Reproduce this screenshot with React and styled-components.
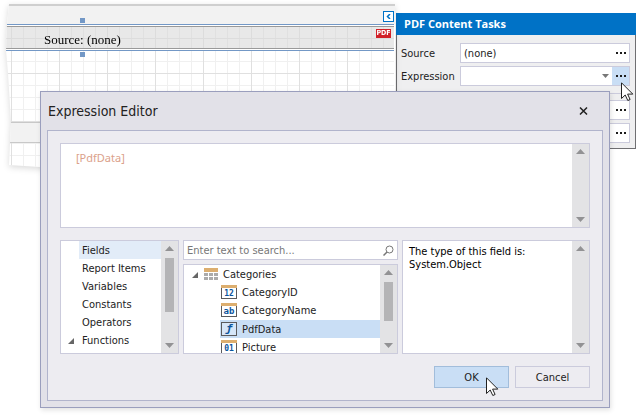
import React from "react";
import styled, { createGlobalStyle, css } from "styled-components";

const sans = `"DejaVu Sans Condensed", Tahoma, "Noto Sans", sans-serif`;

const Global = createGlobalStyle`
  *, *::before, *::after { box-sizing: border-box; }
  body { margin: 0; background: #fff; color: #222; font: 11px/14px ${sans}; }
  button, input, textarea { font: inherit; color: inherit; margin: 0; padding: 0; border: 0; border-radius: 0; outline: 0; background: transparent; }
  ul { margin: 0; padding: 0; list-style: none; }
`;

const Desktop = styled.main`
  position: relative;
  min-height: 100vh;
  overflow: hidden;
`;

const Workspace = styled.div`
  display: flex;
  align-items: flex-start;
  padding: 4px 6px 0;
`;

/* report designer */
const SurfaceShadow = styled.div`
  flex: 1;
  min-width: 0;
  filter: drop-shadow(0 2px 3px rgba(0, 0, 0, 0.15));
`;

const Surface = styled.section`
  clip-path: polygon(3px 0, 100% 0, 100% 170px, 60px 165px, 34px 163px, 3px 161px, 5px 118px, 2px 69px, 0 46px, 1px 20px);
  background: #fff;
`;

const BandHeader = styled.div`
  display: flex;
  justify-content: flex-end;
  height: ${(p) => (p.$first ? 20 : 21)}px;
  padding: 5px 1px 0 0;
  border-top: ${(p) => (p.$first ? "2px solid #cfcfcf" : "1px solid #c8c8c8")};
  border-bottom: ${(p) => (p.$first ? "0" : "1px solid #c8c8c8")};
  background: #f2f2f2;
`;

const gridLines = css`
  background-image:
    linear-gradient(90deg, ${(p) => p.$strong} 1px, transparent 1px),
    linear-gradient(${(p) => p.$strong} 1px, transparent 1px),
    linear-gradient(90deg, ${(p) => p.$light} 1px, transparent 1px),
    linear-gradient(${(p) => p.$light} 1px, transparent 1px);
  background-size: 48px 48px, 48px 48px, 12px 12px, 12px 12px;
  background-position: 5px ${(p) => p.$offset}px;
`;

const SelectedBand = styled.div`
  position: relative;
  margin-right: 1px;
  border: solid #7398c6;
  border-width: 1px 0;
  padding: 1px 0;
`;

const BandBody = styled.div`
  display: flex;
  justify-content: space-between;
  align-items: flex-start;
  height: 23px;
  padding: 2px 3px 0 38px;
  border: solid #999;
  border-width: 1px 0;
  background-color: #e8e8e8;
  ${gridLines}
`;

const ReportText = styled.span`
  padding-top: 2px;
  font: 13px/18px "Liberation Serif", serif;
  color: #000;
`;

const Badge = styled.span`
  width: 15px;
  height: 9px;
  background: #d12027;
  color: #fff;
  font: bold 7px/9px "DejaVu Sans Condensed", sans-serif;
  text-align: center;
`;

const Handle = styled.i`
  position: absolute;
  left: 74px;
  width: 5px;
  height: 5px;
  background: #7398c6;
  ${(p) => (p.$bottom ? "bottom: -7px" : "top: -7px")};
`;

const Grid = styled.div`
  height: ${(p) => p.$height}px;
  margin-right: 1px;
  ${gridLines}
`;

const CollapseButton = styled.button`
  display: grid;
  place-items: center;
  width: 11px;
  height: 11px;
  border: 1px solid #0072c6;
  background: #fff;
`;

/* smart tag panel */
const TaskPanel = styled.aside`
  flex: 0 0 240px;
  min-width: 0;
  margin-top: 9px;
  margin-left: 1px;
  border: 1px solid #6f6f72;
  border-top: 0;
  background: #efeff0;
`;

const TaskTitle = styled.h2`
  margin: 0 -1px;
  padding: 0 8px;
  background: #0072c6;
  color: #fff;
  font: bold 11px/22px "Open Sans", ${sans};
`;

const TaskRows = styled.div`
  display: grid;
  grid-template-columns: minmax(0, 1fr);
  gap: 3px;
  padding: 8px 5px 5px 4px;
`;

const TaskRow = styled.div`
  display: flex;
  align-items: center;
`;

const TaskLabel = styled.label`
  flex: 0 0 59px;
  padding-top: 2px;
`;

const FieldBox = styled.div`
  display: flex;
  align-items: stretch;
  flex: 1;
  min-width: 0;
  height: 20px;
  border: 1px solid #cbcbdc;
  background: #fff;
`;

const FieldInput = styled.input`
  flex: 1;
  min-width: 0;
  padding: 2px 3px 0;
  &::placeholder { color: #777; opacity: 1; }
`;

const FieldButton = styled.button`
  position: relative;
  display: grid;
  place-items: center;
  width: ${(p) => (p.$narrow ? 14 : 17)}px;
  background: ${(p) => (p.$active ? "#c9def5" : "transparent")};
`;

const Separator = styled.hr`
  width: calc(100% - 59px);
  height: 1px;
  margin: 4px 0 3px 59px;
  border: 0;
  background: #cbcbdc;
`;

const Pointer = styled.svg`
  position: absolute;
  z-index: 2;
  left: ${(p) => p.$x}px;
  top: ${(p) => p.$y}px;
  pointer-events: none;
`;

/* expression editor dialog */
const Dialog = styled.section`
  position: absolute;
  top: 91px;
  left: 40px;
  right: 32px;
  padding: 0 6px 6px;
  border: 1px solid #9a9ebd;
  background: #e2e1e8;
  box-shadow: 1px 2px 5px rgba(0, 0, 0, 0.12);
`;

const TitleBar = styled.header`
  display: flex;
  align-items: center;
  justify-content: space-between;
  height: 38px;
  padding: 0 14px 0 1px;
`;

const DialogTitle = styled.h1`
  margin: 0;
  font: 14px/20px ${sans};
`;

const CloseButton = styled.button`
  display: grid;
  place-items: center;
  width: 11px;
  height: 11px;
`;

const Content = styled.div`
  display: grid;
  gap: 12px;
  padding: 12px;
  border: 1px solid #b1b4cc;
  background: #edecf1;
`;

const Box = styled.div`
  display: flex;
  min-width: 0;
  height: ${(p) => p.$height}px;
  border: 1px solid #cbcbdc;
  background: #fff;
  overflow: hidden;
`;

const CodeArea = styled.textarea`
  flex: 1;
  min-width: 0;
  padding: 7px 15px;
  resize: none;
  overflow: hidden;
  color: #dba18b;
  font-family: "Noto Sans", sans-serif;
`;

const Columns = styled.div`
  display: grid;
  grid-template-columns: 119px minmax(0, 215fr) minmax(0, 188fr);
  gap: 4px;
`;

const Stack = styled.div`
  display: grid;
  gap: 4px;
`;

const List = styled.ul`
  flex: 1;
  min-width: 0;
`;

const Item = styled.li`
  display: flex;
  height: 18px;
  padding-left: ${(p) => p.$indent}px;
  margin-top: ${(p) => (p.$selected ? 1 : 0)}px;
`;

const ItemButton = styled.button`
  position: relative;
  display: flex;
  align-items: center;
  gap: 5px;
  flex: 1;
  padding-left: ${(p) => p.$pad}px;
  text-align: left;
  white-space: nowrap;
  background: ${(p) => p.$bg || "transparent"};
`;

const ItemText = styled.span`
  padding-top: 2px;
`;

const Expander = styled.svg`
  position: absolute;
  left: ${(p) => p.$x}px;
  top: 7px;
`;

const Description = styled.p`
  flex: 1;
  margin: 0;
  padding: 4px 6px;
  color: #000;
  line-height: 13px;
`;

const Bar = styled.div`
  flex: 0 0 17px;
  display: flex;
  flex-direction: column;
  align-items: center;
  justify-content: space-between;
  padding: 5px 0;
  background: #e3e3e5;
`;

const Thumb = styled.div`
  flex: 0 0 ${(p) => p.$size}px;
  width: 9px;
  margin: 7px 0 auto;
  background: #b4b4b6;
`;

const Actions = styled.footer`
  display: flex;
  justify-content: flex-end;
  gap: 6px;
`;

const DialogButton = styled.button`
  position: relative;
  width: 75px;
  height: 22px;
  padding-top: 2px;
  border: 1px solid ${(p) => (p.$primary ? "#a2bddb" : "#cbcbdc")};
  background: ${(p) => (p.$primary ? "#c9def5" : "#edecf1")};
`;

const Dots = () => (
  <svg width="10" height="2" fill="#1c1c1c" aria-hidden="true">
    <path d="M0 0h2v2H0zM4 0h2v2H4zM8 0h2v2H8z" />
  </svg>
);

const Arrow = ({ down, small }) => (
  <svg width={small ? 7 : 9} height={small ? 4 : 5} viewBox="0 0 9 5" fill={small ? "#777" : "#929294"} aria-hidden="true">
    <path d={down ? "M0 0h9L4.500 5z" : "M0 5h9L4.500 0z"} />
  </svg>
);

const ScrollBar = ({ thumb }) => (
  <Bar aria-hidden="true">
    <Arrow />
    {thumb && <Thumb $size={thumb} />}
    <Arrow down />
  </Bar>
);

const Cursor = ({ x, y }) => (
  <Pointer $x={x} $y={y} width="13" height="20" viewBox="0 0 13 20" aria-hidden="true">
    <path d="M.5 .8v15.700l3.700-3.500 2.600 5.500 2.300-1-2.500-5.400h5.200z" fill="#fff" stroke="#222" />
  </Pointer>
);

const Triangle = ({ x }) => (
  <Expander $x={x} width="6" height="6" aria-hidden="true">
    <path d="M6 0v6H0z" fill="#666" />
  </Expander>
);

const TableIcon = () => (
  <svg width="14" height="12" aria-hidden="true">
    <path d="M0 0h14v4H0z" fill="#dcae6f" />
    <path d="M0 5h4v3H0zM5 5h4v3H5zM10 5h4v3h-4zM0 9h4v3H0zM5 9h4v3H5zM10 9h4v3h-4z" fill="#ababab" />
  </svg>
);

const FieldIcon = ({ kind }) => {
  const formula = kind === "ƒ";
  return (
    <svg width="16" height="14" viewBox="0 0 16 14" aria-hidden="true">
      <rect x=".5" y=".5" width="15" height="13" fill={formula ? "#d6e6f8" : "#fff"} stroke="#5a5a5c" />
      {!formula && <path d="M0 0h16v3H0z" fill="#dcae6f" />}
      <text
        x="8"
        y={formula ? 10 : 11}
        textAnchor="middle"
        fill="#0b549c"
        fontFamily="DejaVu Sans Mono, monospace"
        fontWeight="bold"
        fontStyle={formula ? "italic" : "normal"}
        fontSize={formula ? 11 : kind === "ab" ? 9 : 8}
      >
        {kind}
      </text>
    </svg>
  );
};

const categories = ["Fields", "Report Items", "Variables", "Constants", "Operators", "Functions"];

const fields = [
  { name: "CategoryID", icon: "12" },
  { name: "CategoryName", icon: "ab" },
  { name: "PdfData", icon: "ƒ", selected: true },
  { name: "Picture", icon: "01" },
];

const Designer = () => (
  <SurfaceShadow>
    <Surface aria-label="Report designer">
      <BandHeader $first>
        <CollapseButton aria-label="Close tasks">
          <svg width="5" height="5" aria-hidden="true">
            <path d="M4 0L1.500 2.500L4 5" fill="none" stroke="#0072c6" strokeWidth="1.500" />
          </svg>
        </CollapseButton>
      </BandHeader>
      <SelectedBand>
        <BandBody $strong="#dcdcdc" $light="#e0e0e0" $offset={11}>
          <ReportText>Source: (none)</ReportText>
          <Badge>PDF</Badge>
        </BandBody>
        <Handle />
        <Handle $bottom />
      </SelectedBand>
      <Grid $height={71} $strong="#e0e0e0" $light="#f0f0f0" $offset={22} />
      <BandHeader />
      <Grid $height={28} $strong="#e0e0e0" $light="#f0f0f0" $offset={24} />
    </Surface>
  </SurfaceShadow>
);

const Tasks = () => (
  <TaskPanel>
    <TaskTitle>PDF Content Tasks</TaskTitle>
    <TaskRows>
      <TaskRow>
        <TaskLabel htmlFor="source">Source</TaskLabel>
        <FieldBox>
          <FieldInput id="source" defaultValue="(none)" />
          <FieldButton aria-label="Browse source"><Dots /></FieldButton>
        </FieldBox>
      </TaskRow>
      <TaskRow>
        <TaskLabel htmlFor="expression">Expression</TaskLabel>
        <FieldBox>
          <FieldInput id="expression" />
          <FieldButton $narrow aria-label="Show fields"><Arrow down small /></FieldButton>
          <FieldButton $active aria-label="Edit expression">
            <Dots />
            <Cursor x={9} y={15} />
          </FieldButton>
        </FieldBox>
      </TaskRow>
      <Separator />
      {["Bindings", "Formatting"].map((name) => (
        <TaskRow key={name}>
          <TaskLabel />
          <FieldBox>
            <FieldInput aria-label={name} />
            <FieldButton aria-label={`Edit ${name}`}><Dots /></FieldButton>
          </FieldBox>
        </TaskRow>
      ))}
    </TaskRows>
  </TaskPanel>
);

const ExpressionEditor = () => (
  <Dialog role="dialog" aria-labelledby="dialog-title">
    <TitleBar>
      <DialogTitle id="dialog-title">Expression Editor</DialogTitle>
      <CloseButton aria-label="Close">
        <svg width="9" height="8" aria-hidden="true">
          <path d="M1 .5L8 7.500M8 .5L1 7.500" stroke="#222" strokeWidth="1.500" />
        </svg>
      </CloseButton>
    </TitleBar>
    <Content>
      <Box $height={85}>
        <CodeArea aria-label="Expression" defaultValue="[PdfData]" spellCheck={false} />
        <ScrollBar />
      </Box>
      <Columns>
        <Box $height={114}>
          <List>
            {categories.map((name, i) => (
              <Item key={name} $indent={18}>
                <ItemButton $pad={3} $bg={i === 0 && "#e2ecf8"}>
                  {name === "Functions" && <Triangle x={-11} />}
                  <ItemText>{name}</ItemText>
                </ItemButton>
              </Item>
            ))}
          </List>
          <ScrollBar thumb={54} />
        </Box>
        <Stack>
          <FieldBox>
            <FieldInput type="text" aria-label="Search" placeholder="Enter text to search..." />
            <FieldButton aria-label="Find">
              <svg width="11" height="11" fill="none" stroke="#777" aria-hidden="true">
                <circle cx="6.500" cy="4.500" r="3.500" />
                <path d="M4 7L.5 10.500" strokeWidth="1.500" />
              </svg>
            </FieldButton>
          </FieldBox>
          <Box $height={90}>
            <List>
              <Item $indent={0}>
                <ItemButton $pad={20}>
                  <Triangle x={8} />
                  <TableIcon />
                  <ItemText>Categories</ItemText>
                </ItemButton>
              </Item>
              {fields.map((f) => (
                <Item key={f.name} $indent={36} $selected={f.selected}>
                  <ItemButton $pad={1} $bg={f.selected && "#c9def5"}>
                    <FieldIcon kind={f.icon} />
                    <ItemText>{f.name}</ItemText>
                  </ItemButton>
                </Item>
              ))}
            </List>
            <ScrollBar thumb={39} />
          </Box>
        </Stack>
        <Box $height={114}>
          <Description>
            The type of this field is:
            <br />
            System.Object
          </Description>
          <ScrollBar />
        </Box>
      </Columns>
      <Actions>
        <DialogButton $primary>
          OK
          <Cursor x={51} y={10} />
        </DialogButton>
        <DialogButton>Cancel</DialogButton>
      </Actions>
    </Content>
  </Dialog>
);

export default function App() {
  return (
    <>
      <Global />
      <Desktop>
        <Workspace>
          <Designer />
          <Tasks />
        </Workspace>
        <ExpressionEditor />
      </Desktop>
    </>
  );
}
